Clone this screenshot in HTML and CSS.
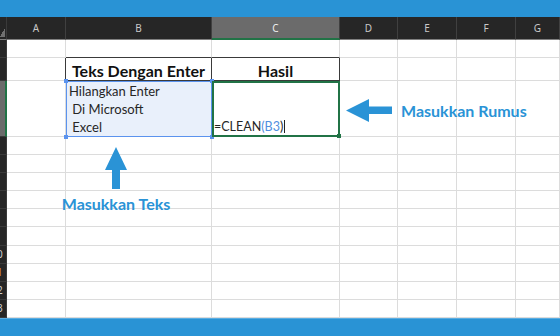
FILE: index.html
```html
<!DOCTYPE html>
<html lang="id">
<head>
  <meta charset="UTF-8">
  <title>Hilangkan Enter di Excel</title>
  <link rel="stylesheet" href="styles.css">
</head>
<body>
  <div class="bar"></div>

  <div class="sheet">
    <div class="corner"></div>
    <div class="hd">A</div><div class="hd">B</div><div class="hd on">C</div><div class="hd">D</div><div class="hd">E</div><div class="hd">F</div><div class="hd">G</div>

    <div class="rh"></div>
    <div></div><div class="above"></div><div class="above"></div><div></div><div></div><div></div><div></div>

    <div class="rh"></div>
    <div class="before"></div><div class="title">Teks Dengan Enter</div><div class="title">Hasil</div><div></div><div></div><div></div><div></div>

    <div class="rh on"></div>
    <div></div>
    <div class="text picked">
      <span>Hilangkan Enter</span>
      <span> Di Microsoft</span>
      <span> Excel</span>
      <i class="knob tl"></i><i class="knob tr"></i><i class="knob bl"></i><i class="knob br"></i>
    </div>
    <div class="text active">
      <span class="formula">=CLEAN<b class="ref">(B3</b>)<u class="caret"></u></span>
      <i class="fill"></i>
    </div>
    <div></div><div></div><div></div><div></div>

    <div class="rh"></div><div></div><div></div><div></div><div></div><div></div><div></div><div></div>
    <div class="rh"></div><div></div><div></div><div></div><div></div><div></div><div></div><div></div>
    <div class="rh"></div><div></div><div></div><div></div><div></div><div></div><div></div><div></div>
    <div class="rh"></div><div></div><div></div><div></div><div></div><div></div><div></div><div></div>
    <div class="rh"></div><div></div><div></div><div></div><div></div><div></div><div></div><div></div>
    <div class="rh"></div><div></div><div></div><div></div><div></div><div></div><div></div><div></div>
    <div class="rh"><span>10</span></div><div></div><div></div><div></div><div></div><div></div><div></div><div></div>
    <div class="rh hot"><span>11</span></div><div></div><div></div><div></div><div></div><div></div><div></div><div></div>
    <div class="rh"><span>12</span></div><div></div><div></div><div></div><div></div><div></div><div></div><div></div>
    <div class="rh"><span>13</span></div><div></div><div></div><div></div><div></div><div></div><div></div><div></div>
  </div>

  <div class="bar bar-bottom"></div>

  <!-- callouts drawn over the sheet -->
  <div class="note note-rumus">
    <svg width="46" height="23" viewBox="0 0 46 23"><polygon points="0,11.5 23,0 23,7.5 46,7.5 46,15 23,15 23,23" fill="#2a93d6"/></svg>
    <span>Masukkan Rumus</span>
  </div>
  <div class="note note-teks">
    <svg width="22" height="42" viewBox="0 0 22 42"><polygon points="11,0 22,23 15,23 15,42 7,42 7,23 0,23" fill="#2a93d6"/></svg>
    <span>Masukkan Teks</span>
  </div>
</body>
</html>
```

FILE: styles.css
```css
body { margin: 0; width: 560px; height: 336px; overflow: hidden; position: relative; font-family: Lato, "Open Sans", sans-serif; background: #fff; }

.bar { height: 17px; background: #2993d5; }
.bar-bottom { height: 18px; box-sizing: border-box; border-top: 1px solid #5aade2; }

.sheet {
  display: grid;
  grid-template-columns: 7px 59px 146px 128px 58px 59px 59px 44px;
  grid-template-rows: 23px 18px 23px 56px repeat(10, 18.1px);
}
.sheet > div { box-sizing: border-box; border-right: 1px solid #dcdcdc; border-bottom: 1px solid #dcdcdc; }

.corner {
  background: #262626 linear-gradient(to bottom right, transparent 50%, #707070 50%) no-repeat 0 11px / 5px 9px;
  border-color: #3a3a3a !important;
  border-bottom-color: #808080 !important;
}
.hd {
  display: flex; align-items: center; justify-content: center;
  background: #262626; color: #c9c9c9;
  font: 10px "Noto Sans", sans-serif;
  border-right-color: #404040 !important;
  border-bottom-color: #808080 !important;
}
.hd.on { background: #6b6b6b; color: #eee; border-bottom: 2px solid #217346 !important; }

.rh {
  display: flex; justify-content: flex-end; align-items: center; overflow: hidden;
  background: #262626; color: #cfcfcf;
  font: 10px "Noto Sans", sans-serif;
  border-color: #3a3a3a !important;
}
.rh span { flex-shrink: 0; width: 26px; margin-right: -4px; text-align: center; }
.rh.on { background: #6b6b6b; border-right: 2px solid #217346 !important; }
.rh.hot { color: #d58a2e; }

.sheet > .above { border-bottom-color: #3a3a3a; }
.sheet > .before { border-right-color: #3a3a3a; }
.sheet > .title {
  display: flex; align-items: flex-end; justify-content: center;
  font-size: 16px; font-weight: bold; line-height: 18px; color: #111;
  border-color: #3a3a3a;
}

.text {
  position: relative;
  display: flex; flex-direction: column; justify-content: flex-end;
  padding-left: 3px;
  font-size: 13px; line-height: 18px; color: #262626;
  white-space: pre;
}
.picked { background: #e9f0fb; outline: 1px solid #5b93ee; outline-offset: -1px; }
.active { padding-left: 2px; outline: 2px solid #217346; outline-offset: -2px; }
.formula { font-size: 12.5px; }

.ref { font-weight: normal; color: #4f8fe0; }
.caret { display: inline-block; width: 1px; height: 13px; margin-left: 1px; background: #222; vertical-align: -2px; }

.knob { position: absolute; width: 4px; height: 4px; background: #5b93ee; }
.tl { left: -2px; top: -2px; }
.tr { right: -3px; top: -2px; }
.bl { left: -2px; bottom: -3px; }
.br { right: -3px; bottom: -3px; }
.fill { position: absolute; right: -2px; bottom: -2px; width: 4px; height: 4px; background: #217346; }

.note { position: absolute; display: flex; align-items: center; color: #2a93d6; font-size: 16px; font-weight: bold; line-height: 18px; }
.note-rumus { left: 346px; top: 99px; gap: 9px; }
.note-teks { left: 56px; top: 147px; width: 120px; flex-direction: column; gap: 6px; }
```
